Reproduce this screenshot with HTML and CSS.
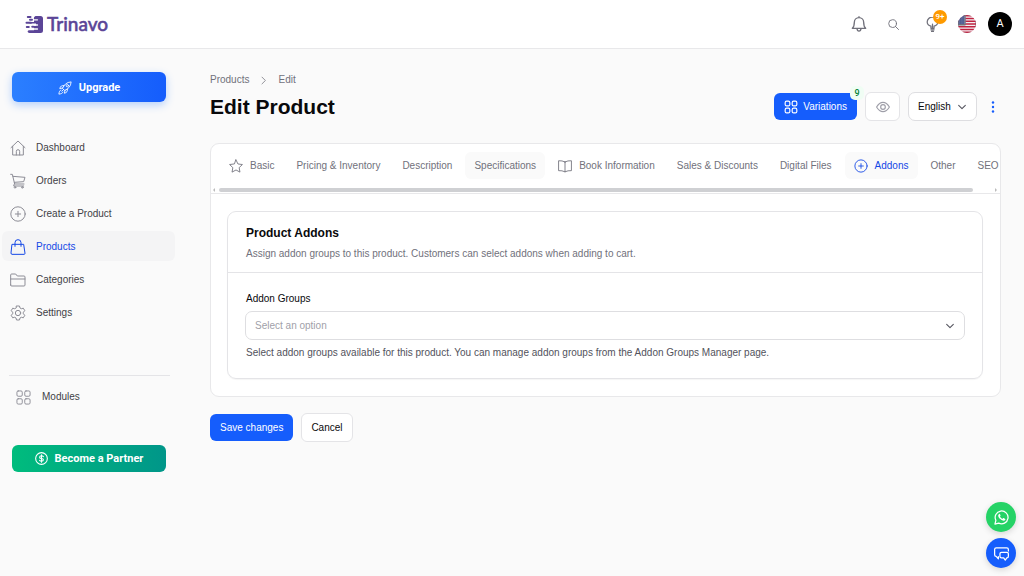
FILE: index.html
```html
<!DOCTYPE html>
<html lang="en">
<head>
<meta charset="utf-8">
<meta name="viewport" content="width=device-width, initial-scale=1">
<title>Edit Product - Trinavo</title>
<link rel="stylesheet" href="styles.css">
</head>
<body>
<header class="topbar">
  <a class="brand" href="#">
    <svg class="brand-mark" viewBox="0 0 19 19" aria-hidden="true">
      <path fill="currentColor" d="M10.500 1H15.500Q18 1 18 3.500V15.500Q18 18 15.500 18H4.500Q2.600 18 2.600 16.600T4.500 15.200H9V12.800H7.500Q6.200 12.700 6.200 11.700T7.500 10.700H11V8.600H4.500V7H9V4.500Q8.600 3.400 9.200 2Z"/>
      <path stroke="currentColor" stroke-width="2" stroke-linecap="round" d="M2.800 2H5.500M1.500 7.800H6M1.800 12H3.800M5 4.800H7"/>
      <path stroke="#fff" stroke-width="1.300" stroke-linecap="round" d="M9 4.800H12.500M9 10H12.500M8 14H12.500"/>
    </svg>
    <span>Trinavo</span>
  </a>
  <div class="top-actions">
    <button class="icon-btn bell" aria-label="Notifications"><svg viewBox="0 0 24 24"><path d="M2 18.500C4.500 16.500 5 14 5 9.500a7 7 0 0 1 14 0c0 4.500.500 7 3 9ZM12 2.500V1M9 19c.300 2.500 1.500 3.700 3 3.700s2.700-1.200 3-3.700"/></svg></button>
    <button class="icon-btn search" aria-label="Search"><svg viewBox="0 0 24 24"><circle cx="10" cy="10" r="8.500"/><path d="m16 16 7 7"/></svg></button>
    <button class="icon-btn tips" aria-label="Tips"><svg viewBox="0 0 24 24"><path d="M9.500 18v-3.500C6 13.500 3.500 11 3.500 8a8.500 8 0 0 1 17 0c0 3-2.500 5.500-6 6.500V18ZM12 18v-6.500M9.500 20.500h5M10.500 23h3"/></svg><span class="count">9+</span></button>
    <button class="flag" aria-label="Country: United States"><svg viewBox="0 0 18 18"><defs><clipPath id="round"><circle cx="9" cy="9" r="9"/></clipPath></defs><g clip-path="url(#round)"><path fill="#f3f1f4" d="M0 0h18v18H0z"/><path stroke="#bf2340" stroke-width="1.400" d="M0 .7h18M0 3.500h18M0 6.200h18M0 9h18M0 11.800h18M0 14.500h18M0 17.300h18"/><path fill="#3f4d86" d="M0 0h7v9.700H0z"/><path stroke="#aab1cf" stroke-width=".6" stroke-dasharray=".7 1.100" d="M1 2h6M1 4h6M1 6h6M1 8h6"/></g></svg></button>
    <button class="avatar" aria-label="Account">A</button>
  </div>
</header>
<div class="shell">
  <aside class="sidebar">
    <button class="promo upgrade"><svg viewBox="0 0 24 24"><path d="M8 12C10 6.500 15 2 22.500 1.500 22 9 17.500 14 12 16ZM8 12l-5 1c1-4 3.500-6 7.500-5M12 16l-1 5c4-1 6-3.500 5-7.500M5 15.500c-2 .500-3 3-3.500 7 4-.500 6.500-1.500 7-3.500M6.500 17.500l3-3"/><circle cx="16" cy="8" r="2"/></svg>Upgrade</button>
    <nav class="nav" aria-label="Main">
      <a href="#"><svg viewBox="0 0 24 24"><path d="M1.500 11.500 12 1.500l10.500 10M4 9.500V22.500h16V9.500M9.500 22.500V17a2.500 2.500 0 0 1 5 0v5.500"/></svg>Dashboard</a>
      <a href="#"><svg viewBox="0 0 24 24"><path d="M1 2h2.500l3.500 14.500h14M4.500 5 22.500 6.500 20.500 13 6.500 14M6.500 16.500 5.500 19.500h15"/><circle cx="7.500" cy="21.500" r="1.200"/><circle cx="18.500" cy="21.500" r="1.200"/></svg>Orders</a>
      <a href="#"><svg viewBox="0 0 24 24"><circle cx="12" cy="12" r="10.800"/><path d="M12 8v8M8 12h8"/></svg>Create a Product</a>
      <a class="active" href="#" aria-current="page"><svg viewBox="0 0 24 24"><path d="M3.500 8h17l2 13.500q0 1.500-1.500 1.500H3q-1.500 0-1.500-1.500ZM7.500 11V5.500a4.500 4.500 0 0 1 9 0V11"/></svg>Products</a>
      <a href="#"><svg viewBox="0 0 24 24"><path d="M1 19.500V4.500Q1 3 2.500 3h6L11 6h10q1.500 0 1.500 1.500v12q0 1.500-1.500 1.500H2.500Q1 21 1 19.500ZM1 10.500h21.500"/></svg>Categories</a>
      <a href="#"><svg viewBox="0 0 24 24"><path d="m9.800 1.500h4.400l.8 3 2 1.100 3-.8 2.200 3.800-2.200 2.200v2.400l2.200 2.200-2.200 3.800-3-.8-2 1.100-.8 3H9.800l-.8-3-2-1.100-3 .8-2.200-3.800L4 13.200v-2.400L1.800 8.600 4 4.800l3 .8 2-1.100Z"/><circle cx="12" cy="12" r="4"/></svg>Settings</a>
    </nav>
    <div class="modules"><a href="#"><svg viewBox="0 0 24 24"><rect x="1.500" y="1.500" width="8.500" height="8.500" rx="2"/><rect x="14" y="1.500" width="8.500" height="8.500" rx="2"/><rect x="1.500" y="14" width="8.500" height="8.500" rx="2"/><rect x="14" y="14" width="8.500" height="8.500" rx="2"/></svg>Modules</a></div>
    <button class="promo partner"><svg viewBox="0 0 24 24"><circle cx="12" cy="12" r="10.800"/><path d="M15.500 8.500Q14.500 7 12 7 8.500 7 8.500 9.500t3.500 2.500 3.500 2.500-3.500 2.500q-2.500 0-3.500-1.500M12 5v14"/></svg>Become a Partner</button>
  </aside>
  <main class="main">
    <div class="page-head">
      <div>
        <nav class="crumbs" aria-label="Breadcrumb"><a href="#">Products</a><svg viewBox="0 0 24 24"><path d="m8 3 9 9-9 9"/></svg><a href="#">Edit</a></nav>
        <h1>Edit Product</h1>
      </div>
      <div class="page-actions">
        <button class="btn primary variations"><svg viewBox="0 0 24 24"><rect x="2" y="2" width="8" height="8" rx="2.500"/><rect x="14" y="2" width="8" height="8" rx="2.500"/><rect x="2" y="14" width="8" height="8" rx="2.500"/><rect x="14" y="14" width="8" height="8" rx="2.500"/></svg>Variations<span class="badge">9</span></button>
        <button class="btn plain preview" aria-label="Preview"><svg viewBox="0 0 24 24"><path d="M1 12C4 7 7.500 4 12 4S20 7 23 12c-3 5-6.500 8-11 8S4 17 1 12Z"/><circle cx="12" cy="12" r="4"/></svg></button>
        <div class="select-wrap language"><select aria-label="Language"><option>English</option></select><svg viewBox="0 0 24 24"><path d="m4 8 8 8 8-8"/></svg></div>
        <button class="more" aria-label="More actions"><svg viewBox="0 0 12 12"><circle cx="6" cy="1.500" r="1.200"/><circle cx="6" cy="6" r="1.200"/><circle cx="6" cy="10.500" r="1.200"/></svg></button>
      </div>
    </div>
    <form class="form">
      <div class="card">
        <div class="tabs" role="tablist">
          <button type="button" role="tab"><svg viewBox="0 0 24 24"><path d="m12 1.500 3.300 7 7.700 1-5.600 5.300 1.400 7.700L12 18.800l-6.800 3.700 1.400-7.700L1 9.500l7.700-1Z"/></svg>Basic</button>
          <button type="button" role="tab">Pricing &amp; Inventory</button>
          <button type="button" role="tab">Description</button>
          <button type="button" role="tab" class="hovered">Specifications</button>
          <button type="button" role="tab"><svg viewBox="0 0 24 24"><path d="M12 5Q7 2.500 1 3v17q6-.500 11 2 5-2.500 11-2V3q-6-.500-11 2Zm0 0v17"/></svg>Book Information</button>
          <button type="button" role="tab">Sales &amp; Discounts</button>
          <button type="button" role="tab">Digital Files</button>
          <button type="button" role="tab" class="selected" aria-selected="true"><svg viewBox="0 0 24 24"><circle cx="12" cy="12" r="10.500"/><path d="M12 8v8M8 12h8"/></svg>Addons</button>
          <button type="button" role="tab">Other</button>
          <button type="button" role="tab">SEO</button>
        </div>
        <div class="scroller" aria-hidden="true"><i class="arrow left"></i><div class="thumb"></div><i class="arrow right"></i></div>
        <div class="card-body">
          <section class="section">
            <div class="section-head">
              <h2>Product Addons</h2>
              <p>Assign addon groups to this product. Customers can select addons when adding to cart.</p>
            </div>
            <div class="section-body">
              <label for="addon-groups">Addon Groups</label>
              <div class="select-wrap wide"><select id="addon-groups" aria-describedby="addon-help"><option>Select an option</option></select><svg viewBox="0 0 24 24"><path d="m4 8 8 8 8-8"/></svg></div>
              <p id="addon-help">Select addon groups available for this product. You can manage addon groups from the Addon Groups Manager page.</p>
            </div>
          </section>
        </div>
      </div>
      <div class="form-actions"><button type="button" class="btn primary">Save changes</button><button type="button" class="btn plain">Cancel</button></div>
    </form>
  </main>
</div>
<div class="floating">
  <button class="whatsapp" aria-label="WhatsApp"><svg viewBox="0 0 24 24"><path d="m1.500 22.500 1.500-6A10.300 10.300 0 1 1 7.500 21Z"/><path class="solid" d="M8.300 6.200c-2.800 1.500-1.500 5.300 1.800 8.300s7 3.700 7.900 1c.4-1.100.2-1.200-.6-1.600l-2-1c-1-.400-1.300 1.300-2 1.200-1.400-.4-3.400-2.400-3.800-3.600 0-.7 1.200-1 .8-2l-.8-1.900q-.4-.8-1.300-.4Z"/></svg></button>
  <button class="chat" aria-label="Chat"><svg viewBox="0 0 24 24"><path d="M7 17v3.500L3.500 16.500Q1 16.500 1 14V5.500Q1 3 3.500 3h17Q23 3 23 5.500V8M12 10h8.500Q23 10 23 12.500v4q0 2.500-2.500 2.500l-2.500 3.500-2.500-3.500H12q-2.500 0-2.500-2.500v-4Q9.500 10 12 10Z"/></svg></button>
</div>
</body>
</html>
```
FILE: styles.css
```css
* { box-sizing: border-box; }
body {
  margin: 0;
  min-height: 100vh;
  background: #fafafa;
  color: #09090b;
  font: 10px/16px "Liberation Sans", Arial, sans-serif;
}
button, select { font: inherit; color: inherit; margin: 0; }
button { padding: 0; border: 0; background: none; cursor: pointer; }
a { color: inherit; text-decoration: none; }
h1, h2, p { margin: 0; }
svg { display: block; flex: none; fill: none; stroke: currentColor; stroke-width: 1.5; stroke-linecap: round; stroke-linejoin: round; }

.topbar {
  display: flex;
  align-items: center;
  justify-content: space-between;
  height: 49px;
  padding: 0 12px 0 25px;
  background: #fff;
  border-bottom: 1px solid #e8e8ea;
}
.brand { display: flex; align-items: center; gap: 3px; color: #5b4597; font: 500 19px/24px Lato, sans-serif; }
.brand span { -webkit-text-stroke: 0.5px currentColor; }
.brand-mark { width: 19px; height: 19px; stroke: none; }
.top-actions { display: flex; align-items: center; color: #71717b; }
.icon-btn { position: relative; display: grid; place-items: center; }
.icon-btn svg { width: 100%; stroke-width: 2; }
.bell { width: 16px; margin-right: 21px; }
.search { width: 11px; margin-right: 26px; }
.tips { width: 15px; margin-right: 18px; }
.count {
  position: absolute;
  left: 8px;
  top: -7px;
  width: 14px;
  height: 14px;
  border-radius: 50%;
  background: #fe9a00;
  color: #fff;
  font: 500 8px/14px Roboto, sans-serif;
}
.flag { width: 18px; margin-right: 12px; }
.avatar { width: 24px; height: 24px; border-radius: 50%; background: #000; color: #fff; font: 11px/24px Roboto, sans-serif; }

.shell { display: grid; grid-template-columns: 178px minmax(0, 1fr); }
.sidebar { padding-top: 23px; color: #3f3f46; }
.promo {
  display: flex;
  align-items: center;
  justify-content: center;
  gap: 7px;
  width: calc(100% - 24px);
  margin-left: 12px;
  border-radius: 6px;
  color: #fff;
  font: 700 11px/16px Roboto, sans-serif;
}
.promo svg { width: 14px; }
.upgrade { height: 30px; padding-top: 1px; background: linear-gradient(90deg, #2b7fff, #155dfc); box-shadow: 0 3px 9px #2b7fff55; }
.partner { height: 27px; margin-top: 40px; background: linear-gradient(90deg, #00bc7d, #009689); }
.partner svg { width: 13px; stroke-width: 2; }
.nav { display: grid; gap: 3px; padding: 30px 3px 0 2px; }
.nav a { display: flex; align-items: center; gap: 10px; height: 30px; padding: 1px 8px 0; border-radius: 6px; }
.nav svg { width: 16px; color: #8d8d96; }
.nav .active { background: #f4f4f5; color: #1447e6; }
.nav .active svg { color: inherit; }
.modules { margin: 48px 8px 0 9px; padding: 13px 7px 0; border-top: 1px solid #e4e4e7; }
.modules a { display: flex; align-items: center; gap: 11px; }
.modules svg { width: 15px; color: #8d8d96; }

.main { padding: 23px 23px 23px 32px; }
.page-head { display: flex; justify-content: space-between; align-items: flex-end; }
.crumbs { display: flex; align-items: center; gap: 10px; color: #71717b; }
.crumbs svg { width: 9px; stroke-width: 2; }
h1 { margin-top: 4px; font-size: 21px; line-height: 30px; }
.page-actions { display: flex; align-items: center; gap: 8px; margin-bottom: 1px; }
.btn { height: 27px; padding: 0 10px; border-radius: 6px; }
.primary { background: #155dfc; color: #fff; }
.plain { height: 29px; padding: 0 9px; background: #fff; border: 1px solid #e4e4e7; }
.variations { position: relative; display: flex; align-items: center; gap: 5px; }
.variations svg { width: 14px; stroke-width: 2; }
.badge {
  position: absolute;
  right: -7px;
  top: -7px;
  width: 14px;
  height: 14px;
  border-radius: 5px;
  background: #f0fdf4;
  color: #008236;
  font: 500 9px/14px Roboto, sans-serif;
}
.preview { width: 35px; color: #9f9fa9; }
.preview svg { width: 14px; margin: auto; stroke-width: 2; }
.select-wrap { display: grid; grid-template-columns: minmax(0, 1fr); align-items: center; }
.select-wrap > * { grid-area: 1 / 1; }
.select-wrap select {
  appearance: none;
  width: 100%;
  height: 29px;
  padding: 0 20px 0 9px;
  border: 1px solid #dedee1;
  border-radius: 7px;
  background: #fff;
}
.select-wrap svg { width: 10px; margin-right: 10px; justify-self: end; color: #52525c; stroke-width: 2.5; pointer-events: none; }
.language { width: 69px; }
.more { width: 16px; color: #155dfc; }
.more svg { width: 12px; margin: auto; fill: currentColor; stroke: none; }

.card { margin-top: 21px; border: 1px solid #e8e8ea; border-radius: 9px; background: #fff; overflow: hidden; }
.tabs { display: flex; gap: 4px; padding: 8px 9px; overflow: hidden; }
.tabs button { display: flex; flex: none; align-items: center; gap: 7px; height: 27px; padding: 0 9px; border-radius: 6px; color: #71717b; white-space: nowrap; }
.tabs svg { width: 14px; }
.tabs .hovered, .tabs .selected { background: #fafafa; }
.tabs .selected { color: #1447e6; }
.scroller { display: flex; align-items: center; gap: 4px; height: 7px; padding: 0 3px 1px 2px; border-bottom: 1px solid #e8e8ea; }
.thumb { flex: 1; height: 4px; margin-right: 18px; border-radius: 2px; background: #cfd0d3; }
.arrow { border: 2px solid transparent; }
.left { border-left-width: 0; border-right-color: #bbb; }
.right { border-right-width: 0; border-left-color: #bbb; }
.card-body { padding: 17px 17px 17px 16px; }
.section { border: 1px solid #e4e4e7; border-radius: 9px; box-shadow: 0 1px 1px #0000000a; }
.section-head { padding: 13px 18px 10px; border-bottom: 1px solid #e4e4e7; }
h2 { font-size: 12px; line-height: 17px; }
.section-head p { margin-top: 4px; color: #71717b; }
.section-body { padding: 18px 17px 17px; }
.section-body label { display: block; margin: 0 1px 4px; }
.section-body p { margin: 5px 1px 0; color: #52525c; }
.wide select { color: #9f9fa9; }
.form-actions { display: flex; align-items: center; gap: 8px; margin-top: 16px; }

.floating { position: fixed; right: 8px; bottom: 8px; display: grid; gap: 6px; }
.floating button { display: grid; place-items: center; width: 30px; height: 30px; border-radius: 50%; color: #fff; box-shadow: 0 2px 6px #00000026; }
.floating svg { width: 15px; stroke-width: 2; }
.floating .solid { fill: currentColor; stroke: none; }
.whatsapp { background: #25d366; }
.chat { background: #155dfc; }
```
